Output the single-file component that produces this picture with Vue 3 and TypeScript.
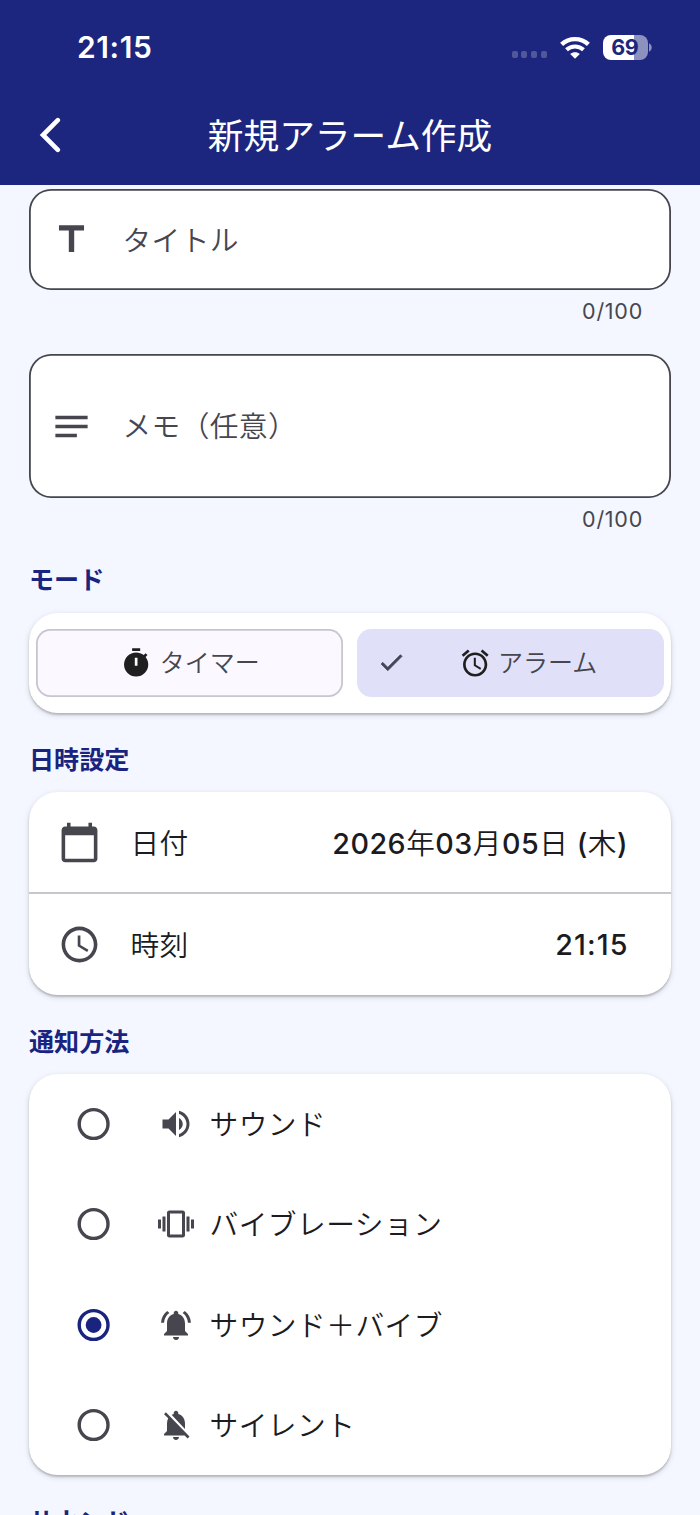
<script setup lang="ts">
import { ref } from 'vue'

interface Method {
  id: string
  label: string
  icon: string
}

const title = ref('')
const memo = ref('')
const mode = ref<'timer' | 'alarm'>('alarm')
const selected = ref('both')

const methods: Method[] = [
  {
    id: 'sound',
    label: 'サウンド',
    icon: 'M3 9v6h4l5 5V4L7 9H3zm13.5 3c0-1.77-1.02-3.29-2.5-4.03v8.05c1.48-.73 2.5-2.25 2.5-4.02zM14 3.23v2.06c2.89.86 5 3.54 5 6.71s-2.11 5.85-5 6.71v2.06c4.01-.91 7-4.49 7-8.77s-2.99-7.86-7-8.77z',
  },
  {
    id: 'vibration',
    label: 'バイブレーション',
    icon: 'M0 15h2V9H0v6zm3 2h2V7H3v10zm19-8v6h2V9h-2zm-3 8h2V7h-2v10zM16.5 3h-9C6.67 3 6 3.67 6 4.5v15c0 .83.67 1.5 1.5 1.5h9c.83 0 1.5-.67 1.5-1.5v-15c0-.83-.67-1.5-1.5-1.5zM16 19H8V5h8v14z',
  },
  {
    id: 'both',
    label: 'サウンド＋バイブ',
    icon: 'M7.58 4.08L6.15 2.65C3.75 4.48 2.17 7.3 2.03 10.5h2c.15-2.65 1.51-4.97 3.55-6.42zm12.39 6.42h2c-.15-3.2-1.73-6.02-4.12-7.85l-1.42 1.43c2.02 1.45 3.39 3.77 3.54 6.42zM18 11c0-3.07-1.64-5.64-4.5-6.32V4c0-.83-.67-1.5-1.5-1.5s-1.5.67-1.5 1.5v.68C7.63 5.36 6 7.92 6 11v5l-2 2v1h16v-1l-2-2v-5zm-6 11c.14 0 .27-.01.4-.04.65-.14 1.18-.58 1.44-1.18.1-.24.15-.5.15-.78h-4c.01 1.1.9 2 2.01 2z',
  },
  {
    id: 'silent',
    label: 'サイレント',
    icon: 'M20 18.69L7.84 6.14 5.27 3.49 4 4.76l2.8 2.8v.01c-.52.99-.8 2.16-.8 3.42v5l-2 2v1h13.73l2 2L21 19.72l-1-1.03zM12 22c1.11 0 2-.89 2-2h-4c0 1.11.89 2 2 2zm6-7.32V11c0-3.08-1.64-5.64-4.5-6.32V4c0-.83-.67-1.5-1.5-1.5s-1.5.67-1.5 1.5v.68c-.15.03-.29.08-.42.12-.1.03-.2.07-.3.11h-.01c-.01 0-.01 0-.02.01-.23.09-.46.2-.68.31 0 0-.01 0-.01.01L18 14.68z',
  },
]
</script>

<template>
  <div class="screen">
    <header class="top">
      <div class="status">
        <span class="clock">21:15</span>
        <div class="indicators">
          <div class="dots"><i></i><i></i><i></i><i></i></div>
          <svg class="wifi" viewBox="0 0 30 23">
            <path d="M1.6 8.4C9 1.3 21 1.3 28.4 8.4" fill="none" stroke="#fff" stroke-width="4.3" />
            <path d="M6.5 13.8C11.3 9.3 18.7 9.3 23.5 13.8" fill="none" stroke="#fff" stroke-width="4" />
            <path d="M15 22.8L10.2 18C12.9 15.6 17.1 15.6 19.8 18z" fill="#fff" />
          </svg>
          <div class="battery"><span>69</span></div>
          <svg class="nub" viewBox="0 0 3 9"><path d="M0 0.3C3.6 1.8 3.6 7.2 0 8.7z" fill="#8d91bd" /></svg>
        </div>
      </div>
      <div class="bar">
        <svg class="back" viewBox="0 0 24 36">
          <path d="M19.8 3.2L5 18l14.8 14.8" fill="none" stroke="#fff" stroke-width="4.6" stroke-linecap="round" />
        </svg>
        <h1>新規アラーム作成</h1>
      </div>
    </header>

    <main>
      <div class="field">
        <svg class="ic24" viewBox="0 0 24 24"><path d="M5 4v3h5.5v12h3V7H19V4z" /></svg>
        <span>タイトル</span>
      </div>
      <div class="counter">{{ title.length }}/100</div>
      <div class="field memo">
        <svg class="ic24" viewBox="0 0 24 24"><path d="M3 18h12v-2H3v2zM3 6v2h18V6H3zm0 7h18v-2H3v2z" /></svg>
        <span>メモ（任意）</span>
      </div>
      <div class="counter">{{ memo.length }}/100</div>

      <h2 class="first">モード</h2>
      <div class="card modes">
        <button class="seg" :class="{ on: mode === 'timer' }" @click="mode = 'timer'">
          <svg class="ic18" viewBox="0 0 24 24"><path d="M9 1h6v2H9zm10.03 6.39 1.42-1.42c-.43-.51-.9-.99-1.41-1.41l-1.42 1.42C16.07 4.74 14.12 4 12 4c-4.97 0-9 4.03-9 9s4.02 9 9 9 9-4.03 9-9c0-2.12-.74-4.07-1.97-5.61M13 14h-2V8h2z" /></svg>
          <span>タイマー</span>
        </button>
        <button class="seg" :class="{ on: mode === 'alarm' }" @click="mode = 'alarm'">
          <svg v-if="mode === 'alarm'" class="check" viewBox="0 0 24 24"><path d="M9 16.17L4.83 12l-1.42 1.41L9 19 21 7l-1.41-1.41z" /></svg>
          <svg class="ic18" viewBox="0 0 24 24"><path d="M22 5.72l-4.6-3.86-1.29 1.53 4.6 3.86L22 5.72zM7.88 3.39L6.6 1.86 2 5.71l1.29 1.53 4.59-3.85zM12.5 8H11v6l4.75 2.85.75-1.23-4-2.37V8zM12 4c-4.97 0-9 4.03-9 9s4.02 9 9 9c4.97 0 9-4.03 9-9s-4.03-9-9-9zm0 16c-3.87 0-7-3.13-7-7s3.13-7 7-7 7 3.13 7 7-3.13 7-7 7z" /></svg>
          <span>アラーム</span>
        </button>
      </div>

      <h2>日時設定</h2>
      <div class="card">
        <div class="row">
          <svg class="ic24" viewBox="0 0 24 24"><path d="M20 3h-1V1h-2v2H7V1H5v2H4c-1.1 0-2 .9-2 2v16c0 1.1.9 2 2 2h16c1.1 0 2-.9 2-2V5c0-1.1-.9-2-2-2zm0 18H4V8h16v13z" /></svg>
          <span class="label">日付</span>
          <span class="value">2026<b>年</b>03<b>月</b>05<b>日</b> (<b>木</b>)</span>
        </div>
        <div class="divider"></div>
        <div class="row">
          <svg class="ic24" viewBox="0 0 24 24"><path d="M11.99 2C6.47 2 2 6.48 2 12s4.47 10 9.99 10C17.52 22 22 17.52 22 12S17.52 2 11.99 2zM12 20c-4.42 0-8-3.58-8-8s3.58-8 8-8 8 3.58 8 8-3.58 8-8 8zm.5-13H11v6l5.25 3.15.75-1.23-4.5-2.67z" /></svg>
          <span class="label">時刻</span>
          <span class="value time">21:15</span>
        </div>
      </div>

      <h2>通知方法</h2>
      <div class="card">
        <div v-for="m in methods" :key="m.id" class="option" @click="selected = m.id">
          <svg class="radio" :class="{ checked: selected === m.id }" viewBox="0 0 34 34">
            <circle class="ring" cx="16.6" cy="17" r="14.4" />
            <circle v-if="selected === m.id" class="dot" cx="16.6" cy="17" r="7.9" />
          </svg>
          <svg class="ic20" viewBox="0 0 24 24"><path :d="m.icon" /></svg>
          <span>{{ m.label }}</span>
        </div>
      </div>

      <h2>サウンド</h2>
    </main>
  </div>
</template>

<style>
body {
  margin: 0;
  background: #f4f7ff;
}
</style>

<style scoped>
.screen {
  width: 700px;
  height: 1515px;
  overflow: hidden;
  background: #f4f7ff;
  font-family: Inter, 'Noto Sans CJK JP', sans-serif;
  color: #1b1b21;
}
svg {
  display: block;
  flex: none;
}
.top {
  height: 185px;
  box-sizing: border-box;
  background: #1d267e;
  color: #fff;
}
.status {
  height: 94px;
  display: flex;
  align-items: center;
  justify-content: space-between;
  padding: 0 48px 0 77px;
}
.clock {
  font-size: 30px;
  font-weight: 600;
  line-height: 36px;
  letter-spacing: 0.6px;
}
.indicators {
  display: flex;
  align-items: center;
}
.dots {
  display: flex;
  gap: 3.6px;
  margin: 15px 13px 0 0;
}
.dots i {
  width: 6px;
  height: 6.5px;
  border-radius: 2px;
  background: #51589a;
}
.wifi {
  width: 30px;
  height: 23px;
  margin-right: 13px;
}
.battery {
  width: 45.5px;
  height: 25px;
  border-radius: 8px;
  background: linear-gradient(90deg, #fff 69%, #8d91bd 69%);
  color: #1d267e;
  font-size: 21.5px;
  font-weight: 700;
  line-height: 25px;
  text-align: center;
  letter-spacing: -0.4px;
}
.battery span {
  padding-right: 1px;
}
.nub {
  width: 3px;
  height: 9px;
  margin-left: 1px;
}
.bar {
  height: 82px;
  display: grid;
  grid-template-columns: 100px 1fr 100px;
  align-items: center;
}
.back {
  width: 24px;
  height: 36px;
  margin-left: 38px;
}
h1 {
  margin: 0;
  padding-top: 1px;
  font-size: 35.7px;
  line-height: 48px;
  font-weight: 400;
  text-align: center;
  white-space: nowrap;
}
main {
  padding: 4px 29px 0;
}
.field {
  height: 101px;
  box-sizing: border-box;
  border-radius: 22px;
  background: #fff;
  box-shadow: inset 0 0 0 1.8px #46464f;
  display: flex;
  align-items: center;
  padding-left: 21px;
  font-size: 28.7px;
  letter-spacing: 0.4px;
  font-weight: 350;
  color: #46464f;
}
.field span {
  margin-left: 29.5px;
  padding-bottom: 3px;
}
.memo {
  height: 144px;
}
.ic24 {
  width: 43px;
  height: 43px;
  fill: #46464f;
}
.ic20 {
  width: 36px;
  height: 36px;
  fill: #46464f;
}
.ic18 {
  width: 32.3px;
  height: 32.3px;
  fill: #1f1f1f;
}
.counter {
  height: 64px;
  box-sizing: border-box;
  padding: 7px 28px 0 0;
  text-align: right;
  font-size: 21.5px;
  line-height: 28px;
  letter-spacing: 0.75px;
  color: #46464f;
}
h2 {
  margin: 0;
  height: 79.2px;
  box-sizing: border-box;
  padding-top: 32px;
  font-size: 25.1px;
  line-height: 30px;
  font-weight: 600;
  color: #1a237e;
}
h2.first {
  height: 50.6px;
  padding-top: 2.5px;
}
.card {
  background: #fff;
  border-radius: 28.7px;
  box-shadow: 0 2px 2px rgba(0, 0, 0, 0.18), 0 2px 6px rgba(0, 0, 0, 0.14);
}
.modes {
  height: 100.2px;
  box-sizing: border-box;
  padding: 16px 7.2px;
  display: grid;
  grid-template-columns: 1fr 1fr;
  gap: 14.4px;
}
.seg {
  position: relative;
  margin: 0;
  padding: 0;
  border: 0;
  border-radius: 14.4px;
  background: #fbf8ff;
  box-shadow: inset 0 0 0 1.8px #c7c5d0;
  display: flex;
  align-items: center;
  justify-content: center;
  gap: 8px;
  font-family: inherit;
  font-size: 25px;
  font-weight: 350;
  color: #46464f;
}
.seg span {
  padding-bottom: 3px;
}
.seg .ic18 {
  margin: 0 -0.5px 0 0.5px;
}
.seg.on .ic18 {
  margin: 0 -1px 0 1px;
}
.seg.on {
  background: #e0e0f8;
  box-shadow: none;
  padding-left: 34px;
}
.check {
  position: absolute;
  left: 19.5px;
  top: 19px;
  width: 28.7px;
  height: 28.7px;
  fill: #444559;
  stroke: #444559;
  stroke-width: 0.6;
}
.row {
  height: 100.4px;
  display: flex;
  align-items: center;
  padding: 0 43px 0 29px;
}
.label {
  margin-left: 29.5px;
  padding-bottom: 2px;
  font-size: 28.7px;
  letter-spacing: 0.2px;
  font-weight: 350;
}
.value {
  margin-left: auto;
  padding-bottom: 1px;
  font-size: 28.7px;
  letter-spacing: 0.5px;
  font-weight: 500;
}
.value b {
  font-weight: 350;
}
.value.time {
  padding-bottom: 0;
  letter-spacing: 1.1px;
  margin-right: -0.6px;
}
.divider {
  height: 1.8px;
  background: #c7c5d0;
}
.option {
  height: 100.4px;
  display: flex;
  align-items: center;
  padding-left: 48px;
  font-size: 28.7px;
  letter-spacing: 0.5px;
  font-weight: 350;
}
.option span {
  padding-bottom: 3px;
}
.option .ic20 {
  margin: 0 15.5px 0 47px;
}
.radio {
  width: 34px;
  height: 34px;
}
.ring {
  fill: none;
  stroke: #46464f;
  stroke-width: 3.4;
}
.checked .ring {
  stroke: #1a237e;
}
.dot {
  fill: #1a237e;
}
</style>
